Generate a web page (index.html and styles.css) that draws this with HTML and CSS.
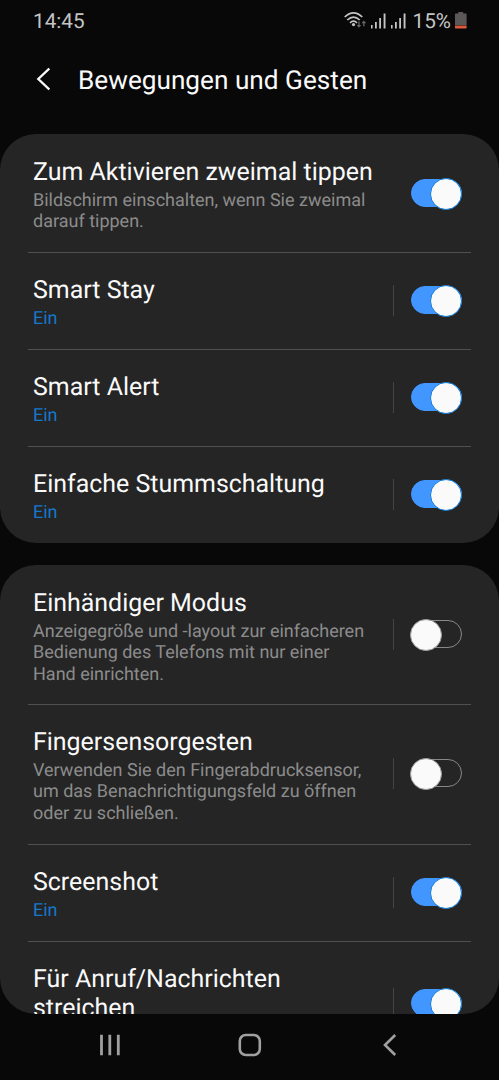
FILE: index.html
```html
<!doctype html>
<html lang="de">
    <head>
        <meta charset="UTF-8" />
        <meta name="viewport" content="width=device-width, initial-scale=1.0" />
        <title>Bewegungen und Gesten</title>
        <link rel="stylesheet" href="styles.css">
    </head>
    <body>
        <div class="status-bar">
            <span class="status-time">14:45</span>
            <div class="status-icons">
                <svg class="icon-wifi" width="23" height="18" viewBox="0 0 23 18">
                    <g fill="none" stroke="#c4c4c4" stroke-width="1.7">
                        <path d="M0.7 6Q9.5 -2.4 18.3 6" />
                        <path d="M3.3 9Q9.5 3.1 15.7 9" />
                        <path d="M6 11.8Q9.5 8.5 13 11.8" />
                    </g>
                    <circle cx="9.5" cy="13.6" r="1.6" fill="#c4c4c4" />
                    <g fill="#666">
                        <path d="M14.3 10.5h1.3v3.5h1.7l-2.35 2.8-2.35-2.8h1.7z" />
                        <path d="M19.2 15.3h1.3v-3h1.7l-2.35-2.8-2.35 2.8h1.7z" />
                    </g>
                </svg>
                <svg class="icon-signal" width="15" height="16" viewBox="0 0 15 16">
                    <path fill="#c4c4c4" d="M0 12h1.6v3.5H0zM4 9h1.8v6.5H4zM8.2 5h1.8v10.5H8.2zM12.6 0.5h1.9v15h-1.9z" />
                </svg>
                <svg class="icon-signal" width="15" height="16" viewBox="0 0 15 16">
                    <path fill="#c4c4c4" d="M0 12h1.6v3.5H0zM4 9h1.8v6.5H4zM8.2 5h1.8v10.5H8.2zM12.6 0.5h1.9v15h-1.9z" />
                </svg>
                <span class="status-percent">15%</span>
                <svg class="icon-battery" width="12" height="17" viewBox="0 0 12 17">
                    <path fill="#5c5857" d="M3.3 0h4.9v1.4H11q.6 0 .6.6v11H0V2q0-.6.6-.6h2.7z" />
                    <path fill="#dc5a3c" d="M0 13.4h11.6v2.4q0 .6-.6.6H.6q-.6 0-.6-.6z" />
                </svg>
            </div>
        </div>

        <header class="header">
            <svg class="header-back" width="14" height="24" viewBox="0 0 14 24">
                <path d="M13.3 1.5L2.3 12l11 10.5" fill="none" stroke="#fafafa" stroke-width="2.3" />
            </svg>
            <h1 class="header-title">Bewegungen und Gesten</h1>
        </header>

        <main class="settings">
            <section class="card">
                <div class="row">
                    <div class="row-text">
                        <div class="row-title">Zum Aktivieren zweimal tippen</div>
                        <div class="row-desc">Bildschirm einschalten, wenn Sie zweimal<br>darauf tippen.</div>
                    </div>
                    <div class="switch switch--on"></div>
                </div>
                <div class="row row--split">
                    <div class="row-text">
                        <div class="row-title">Smart Stay</div>
                        <div class="row-desc row-desc--on">Ein</div>
                    </div>
                    <div class="switch switch--on"></div>
                </div>
                <div class="row row--split">
                    <div class="row-text">
                        <div class="row-title">Smart Alert</div>
                        <div class="row-desc row-desc--on">Ein</div>
                    </div>
                    <div class="switch switch--on"></div>
                </div>
                <div class="row row--split">
                    <div class="row-text">
                        <div class="row-title">Einfache Stummschaltung</div>
                        <div class="row-desc row-desc--on">Ein</div>
                    </div>
                    <div class="switch switch--on"></div>
                </div>
            </section>

            <section class="card card--last">
                <div class="row row--split">
                    <div class="row-text">
                        <div class="row-title">Einhändiger Modus</div>
                        <div class="row-desc">Anzeigegröße und -layout zur einfacheren<br>Bedienung des Telefons mit nur einer<br>Hand einrichten.</div>
                    </div>
                    <div class="switch"></div>
                </div>
                <div class="row row--split">
                    <div class="row-text">
                        <div class="row-title">Fingersensorgesten</div>
                        <div class="row-desc">Verwenden Sie den Fingerabdrucksensor,<br>um das Benachrichtigungsfeld zu öffnen<br>oder zu schließen.</div>
                    </div>
                    <div class="switch"></div>
                </div>
                <div class="row row--split">
                    <div class="row-text">
                        <div class="row-title">Screenshot</div>
                        <div class="row-desc row-desc--on">Ein</div>
                    </div>
                    <div class="switch switch--on"></div>
                </div>
                <div class="row row--split row--cut">
                    <div class="row-text">
                        <div class="row-title">Für Anruf/Nachrichten<br>streichen</div>
                    </div>
                    <div class="switch switch--on"></div>
                </div>
            </section>
        </main>

        <nav class="nav-bar">
            <svg width="24" height="24" viewBox="0 0 24 24">
                <path d="M3.5 1.7v20.6M11.8 1.7v20.6M20.3 1.7v20.6" stroke="#a0a0a0" stroke-width="2.8" />
            </svg>
            <svg width="24" height="24" viewBox="0 0 24 24">
                <rect x="1.8" y="2" width="20" height="20" rx="6" fill="none" stroke="#a0a0a0" stroke-width="2.6" />
            </svg>
            <svg width="24" height="24" viewBox="0 0 24 24">
                <path d="M17.2 2L7 12l10.2 10" fill="none" stroke="#a0a0a0" stroke-width="2.6" />
            </svg>
        </nav>
    </body>
</html>
```
FILE: styles.css
```css
* {
    padding: 0;
    margin: 0;
    box-sizing: border-box;
}

body {
    font-family: Roboto, sans-serif;
    text-rendering: geometricPrecision;
    background-color: #080808;
    color: #fafafa;
    height: 100vh;
    display: flex;
    flex-direction: column;
    overflow: hidden;
}

.status-bar {
    height: 41px;
    flex: none;
    display: flex;
    align-items: center;
    justify-content: space-between;
    padding: 2px 32px 0 33px;
    font-size: 20.7px;
    color: #c4c4c4;
}

.status-icons {
    display: flex;
    align-items: center;
}

.icon-wifi {
    margin-bottom: 3px;
}

.icon-signal {
    margin-left: 5px;
    margin-bottom: 1px;
}

.icon-wifi + .icon-signal {
    margin-left: 4px;
}

.icon-battery {
    margin-bottom: 2px;
}

.status-percent {
    margin: 0 4px 0 7px;
}

.header {
    height: 93px;
    flex: none;
    display: flex;
    align-items: center;
    padding: 0 36px 14px;
}

.header-back {
    margin-bottom: 4px;
}

.header-title {
    margin-left: 28px;
    font-size: 26.2px;
    font-weight: 400;
}

.settings {
    flex: 1;
    min-height: 0;
    display: flex;
    flex-direction: column;
    gap: 22px;
}

.card {
    flex: none;
    background-color: #252525;
    border-radius: 36px;
    overflow: hidden;
    padding: 0 28px;
}

.card--last {
    flex: 1;
    min-height: 0;
}

.row {
    display: flex;
    align-items: center;
    justify-content: space-between;
    padding: 23.2px 9px 19.5px 5px;
    border-bottom: 1px solid #505050;
}

.row:first-child {
    padding-top: 24px;
    padding-bottom: 18.7px;
}

.row:last-child {
    border-bottom: none;
}

.row--cut {
    height: 127px;
    align-items: flex-start;
}

.row--cut .switch {
    margin-top: 24px;
}

.row-title {
    font-size: 24.95px;
    line-height: 29px;
    white-space: nowrap;
}

.row-desc {
    margin-top: 3px;
    font-size: 18px;
    line-height: 21.4px;
    color: #8c8c8c;
    white-space: nowrap;
}

.row-desc--on {
    color: #1478cc;
}

.row--split .row-text {
    width: 340px;
}

.row--split .switch::before {
    content: "";
    position: absolute;
    left: -19px;
    top: -2px;
    width: 1px;
    height: 31px;
    background-color: #444;
}

.switch {
    position: relative;
    flex: none;
    width: 51px;
    height: 28px;
    margin-bottom: 5px;
    border: 1px solid #888;
    border-radius: 14px;
}

.switch::after {
    content: "";
    position: absolute;
    left: -2px;
    top: -2px;
    width: 30px;
    height: 30px;
    border: 1px solid #999;
    border-radius: 50%;
    background-color: #fafafa;
}

.switch--on {
    border-color: #4296ff;
    background-color: #4296ff;
}

.switch--on::after {
    left: auto;
    right: -1px;
    border-color: #0a7ad8;
}

.nav-bar {
    height: 66px;
    flex: none;
    display: flex;
    align-items: center;
    justify-content: center;
    gap: 116px;
    padding-bottom: 4px;
}
```
